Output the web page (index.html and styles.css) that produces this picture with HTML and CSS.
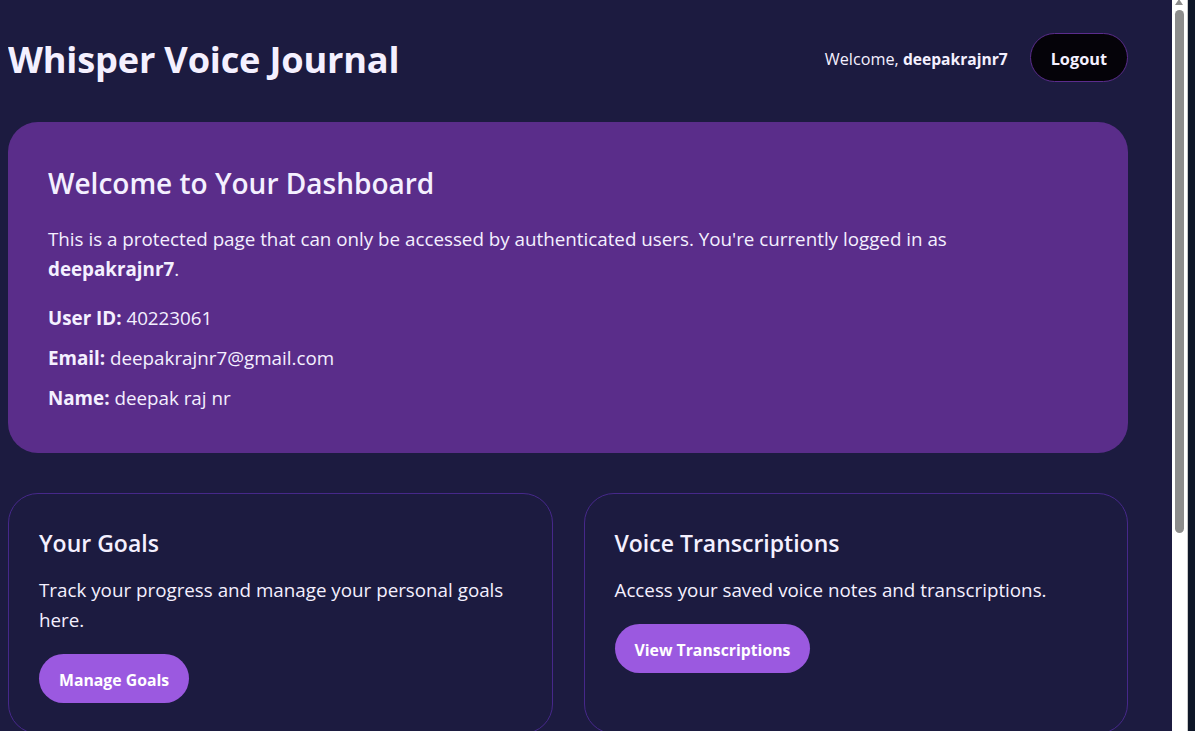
FILE: index.html
```html
<!DOCTYPE html>
<html lang="en">
<head>
<meta charset="utf-8">
<title>Whisper Voice Journal</title>
<link rel="stylesheet" href="styles.css">
</head>
<body>
<div class="app">
  <header class="topbar">
    <h1 class="brand">Whisper Voice Journal</h1>
    <div class="user-area">
      <span class="welcome">Welcome, <strong>deepakrajnr7</strong></span>
      <button class="btn-logout" type="button">Logout</button>
    </div>
  </header>
  <main class="content">
    <section class="hero">
      <h2 class="hero-title">Welcome to Your Dashboard</h2>
      <p class="intro">This is a protected page that can only be accessed by authenticated users. You're currently logged in as <strong>deepakrajnr7</strong>.</p>
      <p class="info"><strong>User ID:</strong> 40223061</p>
      <p class="info"><strong>Email:</strong> deepakrajnr7@gmail.com</p>
      <p class="info"><strong>Name:</strong> deepak raj nr</p>
    </section>
    <div class="cards">
      <section class="card">
        <h3 class="card-title">Your Goals</h3>
        <p class="card-text">Track your progress and manage your personal goals here.</p>
        <button class="btn-primary" type="button">Manage Goals</button>
      </section>
      <section class="card">
        <h3 class="card-title">Voice Transcriptions</h3>
        <p class="card-text">Access your saved voice notes and transcriptions.</p>
        <button class="btn-primary" type="button">View Transcriptions</button>
      </section>
    </div>
  </main>
</div>
<div class="scrollbar" aria-hidden="true">
  <span class="scrollbar-arrow"></span>
  <span class="scrollbar-thumb"></span>
</div>
</body>
</html>
```
FILE: styles.css
```css
html {
  background: #1c1b40;
}
body {
  margin: 8px;
  background: #1c1b40;
  color: #f4f0ff;
  font-family: "Open Sans", "Noto Sans", sans-serif;
}
.app {
  max-width: 1120px;
  padding-bottom: 120px;
}
.topbar {
  display: flex;
  align-items: center;
  justify-content: space-between;
  padding: 25px 0;
  margin-bottom: 15px;
}
.brand {
  margin: 0;
  padding-top: 3px;
  font-size: 36.2px;
  line-height: 44px;
  font-weight: 700;
  letter-spacing: -0.2px;
}
.user-area {
  display: flex;
  align-items: center;
  gap: 22px;
}
.welcome {
  padding-top: 3px;
  font-size: 16.2px;
}
.welcome strong {
  font-weight: 700;
  font-size: 15.6px;
}
.btn-logout {
  height: 49px;
  padding: 3px 20px 0;
  border: 1px solid #5b2c8c;
  border-radius: 25px;
  background: #050309;
  color: #f4f0ff;
  font-family: inherit;
  font-size: 16.3px;
  font-weight: 700;
}
.hero {
  background: #5a2d8a;
  border-radius: 30px;
  padding: 43px 40px 40px;
}
.hero-title {
  margin: 0 0 23px;
  font-size: 28px;
  line-height: 36px;
  font-weight: 600;
}
.hero p {
  margin: 0 0 10px;
  font-size: 18.8px;
  line-height: 30px;
}
.hero .intro {
  max-width: 960px;
  margin-bottom: 19px;
}
.hero .info:last-child {
  margin-bottom: 0;
}
.cards {
  display: grid;
  grid-template-columns: 1fr 1fr;
  gap: 31px;
  margin-top: 40px;
}
.card {
  border: 1px solid #46288a;
  border-radius: 30px;
  padding: 34px 30px 30px;
}
.card-title {
  margin: 0 0 17px;
  font-size: 23px;
  line-height: 30px;
  font-weight: 600;
}
.card-text {
  margin: 0 0 19px;
  font-size: 18.8px;
  line-height: 30px;
}
.btn-primary {
  height: 49px;
  padding: 3px 20px 0;
  border: none;
  border-radius: 25px;
  background: #9b59e0;
  color: #ffffff;
  font-family: inherit;
  font-size: 15.8px;
  font-weight: 700;
}
.scrollbar {
  position: fixed;
  top: 0;
  right: 0;
  width: 23px;
  height: 100vh;
  display: flex;
  flex-direction: column;
  background: linear-gradient(90deg, #ffffff 0 15px, #c9c9c9 15px 16px, #0e1628 16px);
}
.scrollbar-arrow {
  width: 0;
  height: 0;
  margin: -1px 0 0 3px;
  border-left: 4.5px solid transparent;
  border-right: 4.5px solid transparent;
  border-bottom: 6px solid #8c8c8c;
}
.scrollbar-thumb {
  width: 9px;
  height: 523px;
  margin: 5px 0 0 3px;
  border-radius: 5px;
  background: #8c8c8c;
}
```
